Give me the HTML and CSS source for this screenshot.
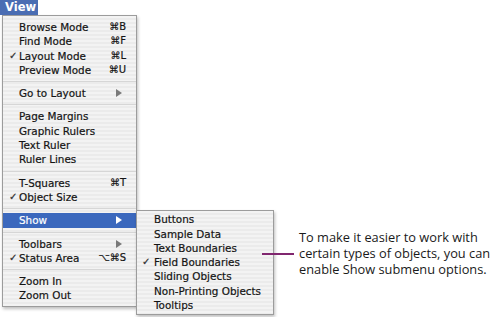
FILE: index.html
```html
<!DOCTYPE html>
<html lang="en">
<head>
    <meta charset="UTF-8">
    <title>View menu</title>
    <link rel="stylesheet" href="styles.css">
</head>
<body>
    <div class="canvas">
        <div class="menubar">
            <span class="menu-title">View</span>
        </div>

        <ul class="menu">
            <li class="item"><span class="label">Browse Mode</span><span class="key">⌘B</span></li>
            <li class="item"><span class="label">Find Mode</span><span class="key">⌘F</span></li>
            <li class="item checked"><span class="label">Layout Mode</span><span class="key">⌘L</span></li>
            <li class="item"><span class="label">Preview Mode</span><span class="key">⌘U</span></li>
            <li class="sep"></li>
            <li class="item"><span class="label">Go to Layout</span><span class="arrow"></span></li>
            <li class="sep"></li>
            <li class="item"><span class="label">Page Margins</span></li>
            <li class="item"><span class="label">Graphic Rulers</span></li>
            <li class="item"><span class="label">Text Ruler</span></li>
            <li class="item"><span class="label">Ruler Lines</span></li>
            <li class="sep"></li>
            <li class="item"><span class="label">T-Squares</span><span class="key">⌘T</span></li>
            <li class="item checked"><span class="label">Object Size</span></li>
            <li class="sep"></li>
            <li class="item active">
                <span class="label">Show</span><span class="arrow"></span>
                <ul class="submenu">
                    <li class="item"><span class="label">Buttons</span></li>
                    <li class="item"><span class="label">Sample Data</span></li>
                    <li class="item"><span class="label">Text Boundaries</span></li>
                    <li class="item checked"><span class="label">Field Boundaries</span></li>
                    <li class="item"><span class="label">Sliding Objects</span></li>
                    <li class="item"><span class="label">Non-Printing Objects</span></li>
                    <li class="item"><span class="label">Tooltips</span></li>
                </ul>
            </li>
            <li class="sep"></li>
            <li class="item"><span class="label">Toolbars</span><span class="arrow"></span></li>
            <li class="item checked"><span class="label">Status Area</span><span class="key">⌥⌘S</span></li>
            <li class="sep"></li>
            <li class="item"><span class="label">Zoom In</span></li>
            <li class="item"><span class="label">Zoom Out</span></li>
        </ul>

        <div class="callout">
            <span class="leader"></span>
            <p>To make it easier to work with certain types of objects, you can enable Show submenu options.</p>
        </div>
    </div>
</body>
</html>
```

FILE: styles.css
```css
* {
    box-sizing: border-box;
    margin: 0;
    padding: 0;
}

body {
    background: #ffffff;
    width: 500px;
    height: 317px;
    overflow: hidden;
    font-family: 'DejaVu Sans', Verdana, sans-serif;
}

.canvas {
    position: relative;
    width: 500px;
    height: 317px;
}

.menubar {
    height: 15px;
    display: flex;
}

.menu-title {
    display: block;
    width: 38px;
    height: 15px;
    padding-left: 5px;
    background: #4a6db3;
    color: #ffffff;
    font-size: 11.5px;
    font-weight: bold;
    line-height: 15px;
}

.menu,
.submenu {
    list-style: none;
    background: repeating-linear-gradient(to bottom, #f3f3f3 0, #f3f3f3 2px, #ebebeb 2px, #ebebeb 4px);
    border: 1px solid #9c9c9c;
    box-shadow: 1px 2px 3px rgba(0, 0, 0, 0.25);
}

.menu {
    width: 135px;
    margin-left: 2px;
    padding: 4px 0 3px;
}

.item {
    position: relative;
    display: flex;
    align-items: center;
    height: 14.3px;
    padding: 0 10px 0 16px;
    font-size: 10.4px;
    line-height: 14.3px;
    color: #141414;
    -webkit-text-stroke: 0.2px #141414;
}

.item .label {
    flex: 1;
    white-space: nowrap;
}

.item.checked::before {
    content: "✓";
    position: absolute;
    left: 6px;
    font-size: 10px;
    color: #333333;
}

.key {
    font-size: 10px;
    text-align: right;
    white-space: nowrap;
}

.arrow {
    width: 0;
    height: 0;
    margin-right: 4px;
    border-top: 4px solid transparent;
    border-bottom: 4px solid transparent;
    border-left: 6px solid #7a7a7a;
}

.sep {
    height: 9px;
    display: flex;
    align-items: center;
}

.sep::after {
    content: "";
    display: block;
    width: 100%;
    height: 1px;
    background: #d6d6d6;
}

.item.active {
    background: #3b68bd;
    color: #ffffff;
    -webkit-text-stroke: 0.2px #ffffff;
}

.item.active .arrow {
    border-left-color: #ffffff;
}

.submenu {
    position: absolute;
    left: 133px;
    top: -3px;
    width: 138px;
    padding: 1px 0 2px;
}

.submenu .item {
    padding-left: 17px;
    color: #141414;
    -webkit-text-stroke: 0.2px #141414;
}

.submenu .item.checked::before {
    left: 5px;
}

.callout {
    position: absolute;
    left: 262px;
    top: 229px;
    display: flex;
    align-items: flex-start;
}

.leader {
    display: block;
    width: 32px;
    height: 2px;
    margin-top: 24px;
    margin-right: 5px;
    background: #80266f;
}

.callout p {
    width: 205px;
    font-family: 'Open Sans', 'Liberation Sans', sans-serif;
    font-size: 12.8px;
    line-height: 16px;
    color: #1a1a1a;
}
```
